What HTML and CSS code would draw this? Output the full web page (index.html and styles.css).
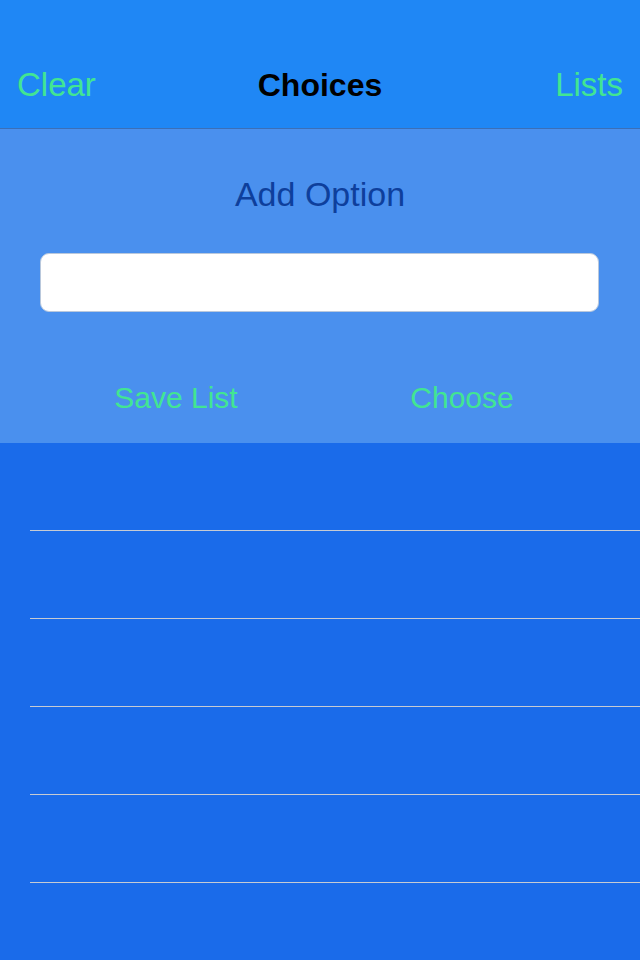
FILE: index.html
```html
<!DOCTYPE html>
<html>
<head>
<meta charset="utf-8">
<link rel="stylesheet" href="styles.css">
</head>
<body>
<div class="app">
  <header class="navbar">
    <span class="nav-btn">Clear</span>
    <span class="nav-title">Choices</span>
    <span class="nav-btn">Lists</span>
  </header>
  <section class="panel">
    <div class="panel-title">Add Option</div>
    <div class="field"></div>
    <div class="actions">
      <span class="action">Save List</span>
      <span class="action">Choose</span>
    </div>
  </section>
  <ul class="list">
    <li class="row"></li>
    <li class="row"></li>
    <li class="row"></li>
    <li class="row"></li>
    <li class="row"></li>
    <li class="row"></li>
  </ul>
</div>
</body>
</html>
```
FILE: styles.css
```css
* { box-sizing: border-box; }
html, body { margin: 0; padding: 0; }
body {
  width: 640px;
  height: 960px;
  overflow: hidden;
  background: #1a6bea;
  font-family: "Liberation Sans", Arial, Helvetica, sans-serif;
}
.app { display: flex; flex-direction: column; height: 960px; }
.navbar {
  flex-shrink: 0;
  height: 129px;
  background: #1f87f5;
  border-bottom: 1px solid #3a6fb8;
  display: flex;
  align-items: flex-end;
  justify-content: space-between;
  padding: 0 17px 23px 17px;
  position: relative;
}
.nav-btn {
  color: #42e592;
  font-size: 33px;
  line-height: 40px;
}
.nav-title {
  position: absolute;
  left: 0;
  right: 0;
  bottom: 23px;
  text-align: center;
  font-weight: bold;
  font-size: 32px;
  line-height: 40px;
  color: #000;
}
.panel {
  flex-shrink: 0;
  height: 314px;
  background: #4a90ee;
  display: flex;
  flex-direction: column;
  align-items: center;
  padding-top: 43px;
}
.panel-title {
  color: #0e3f9c;
  font-size: 34px;
  line-height: 44px;
}
.field {
  margin-top: 37px;
  width: 559px;
  height: 59px;
  margin-left: -1px;
  background: #fff;
  border: 1px solid #b9c8dc;
  border-radius: 9px;
}
.actions {
  margin-top: 68px;
  width: 100%;
  display: grid;
  grid-template-columns: 352px 220px;
}
.action {
  color: #42e592;
  font-size: 30px;
  line-height: 36px;
  text-align: center;
}
.list {
  list-style: none;
  margin: 0;
  padding: 0 0 0 30px;
  flex: 1;
}
.row {
  height: 88px;
  border-bottom: 1px solid #c7cbd3;
}
.row:last-child { border-bottom: none; }
```
